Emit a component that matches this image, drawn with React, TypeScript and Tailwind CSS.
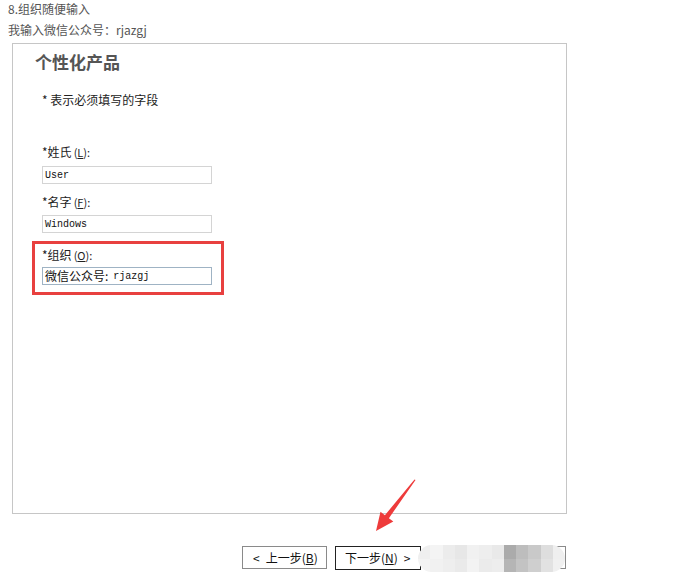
import { Fragment } from 'react';

const CJK = '"Noto Sans CJK SC", "Liberation Sans", sans-serif';

const BLUR_BLOCKS = [
  ['#efefef', '#f3f3f3'],
  ['#f4f4f4', '#f1f1f1'],
  ['#ececec', '#eeeeee'],
  ['#e7e7e7', '#eaeaea'],
  ['#f1f1f1', '#f3f3f3'],
  ['#eeeeee', '#ebebeb'],
  ['#e9e9e9', '#ededed'],
  ['#ababab', '#b5b5b5'],
  ['#bdbdbd', '#c3c3c3'],
  ['#c9c9c9', '#cfcfcf'],
  ['#dedede', '#e2e2e2'],
  ['#efefef', '#f0f0f0'],
];

function Field({ label, hotkey, value }: { label: string; hotkey: string; value: React.ReactNode }) {
  return (
    <Fragment>
      <div className="h-[16px] leading-[16px] text-[12px] text-[#222]">
        *{label}
        <span className="text-[11px] ml-[2px]">(</span>
        <span className="text-[11px] underline">{hotkey}</span>
        <span className="text-[11px]">):</span>
      </div>
      {value}
    </Fragment>
  );
}

function InputBox({ children, tinted }: { children: React.ReactNode; tinted?: boolean }) {
  return (
    <div
      className={`w-[170px] h-[18px] border bg-white flex items-center pl-[2px] text-[#111] ${
        tinted ? 'border-[#9fb3c4]' : 'border-[#d4d4d4]'
      }`}
    >
      {children}
    </div>
  );
}

export default function App() {
  return (
    <div className="relative w-[680px] h-[587px] bg-white overflow-hidden" style={{ fontFamily: CJK }}>
      {/* header notes */}
      <div className="pl-[8px] text-[12px] text-[#555]">
        <div className="h-[17px] leading-[17px]">8.组织随便输入</div>
        <div className="h-[26px] leading-[26px]">我输入微信公众号：rjazgj</div>
      </div>

      {/* installer panel */}
      <div className="ml-[12px] w-[555px] h-[471px] border border-[#c6c6c6] pt-[6px]">
        <div className="pl-[22px] h-[24px] leading-[24px] text-[17px] font-bold text-[#555]">个性化产品</div>
        <div className="pl-[29px] mt-[18px] h-[16px] leading-[16px] text-[12px] text-[#222]">* 表示必须填写的字段</div>

        <div className="pl-[29px] mt-[36px] flex flex-col items-start">
          <Field
            label="姓氏"
            hotkey="L"
            value={
              <div className="mt-[6px]">
                <InputBox>
                  <span className="text-[10px]" style={{ fontFamily: '"Liberation Mono", monospace' }}>User</span>
                </InputBox>
              </div>
            }
          />
          <div className="mt-[10px]">
            <Field
              label="名字"
              hotkey="F"
              value={
                <div className="mt-[5px]">
                  <InputBox>
                    <span className="text-[10px]" style={{ fontFamily: '"Liberation Mono", monospace' }}>Windows</span>
                  </InputBox>
                </div>
              }
            />
          </div>

          <div className="-ml-[10px] mt-[8px] w-[192px] h-[54px] border-[3px] border-[#e8403f] pl-[7px] pt-[3px]">
            <Field
              label="组织"
              hotkey="O"
              value={
                <div className="mt-[4px]">
                  <InputBox tinted>
                    <span className="text-[12px] leading-[14px]">微信公众号:</span>
                    <span className="text-[10px] ml-[5px]" style={{ fontFamily: '"Liberation Mono", monospace' }}>rjazgj</span>
                  </InputBox>
                </div>
              }
            />
          </div>
        </div>
      </div>

      {/* wizard buttons */}
      <div className="relative mt-[32px] ml-[242px] flex gap-[8px] text-[12px] text-[#111]">
        <div className="w-[85px] h-[23px] border border-[#8a8a8a] bg-white flex items-center pl-[10px] gap-[6px]">
          <span>&lt;</span>
          <span>
            上一步(<span className="underline">B</span>)
          </span>
        </div>
        <div className="w-[86px] h-[24px] border border-[#222] bg-white flex items-center pl-[9px] gap-[6px]">
          <span>
            下一步(<span className="underline">N</span>)
          </span>
          <span>&gt;</span>
        </div>
        <div className="w-[85px] h-[23px] border border-[#8a8a8a] bg-white ml-[52px]" />

        {/* mosaic blur over the cancel button */}
        <div className="absolute left-[176px] -top-[1px] w-[147px] h-[27px] rounded-full overflow-hidden flex">
          {BLUR_BLOCKS.map(([top, bottom], i) => (
            <div key={i} className="flex-1 flex flex-col">
              <div className="flex-1" style={{ background: top }} />
              <div className="flex-1" style={{ background: bottom }} />
            </div>
          ))}
        </div>
      </div>

      {/* red annotation arrow */}
      <svg className="absolute left-0 top-0 pointer-events-none" width="680" height="587">
        <polygon
          points="415.5,480 388.9,518.2 393.3,521.6 376,531 380.5,511.8 384.9,515.2 414.5,479.5"
          fill="#ee3b3b"
        />
      </svg>
    </div>
  );
}
